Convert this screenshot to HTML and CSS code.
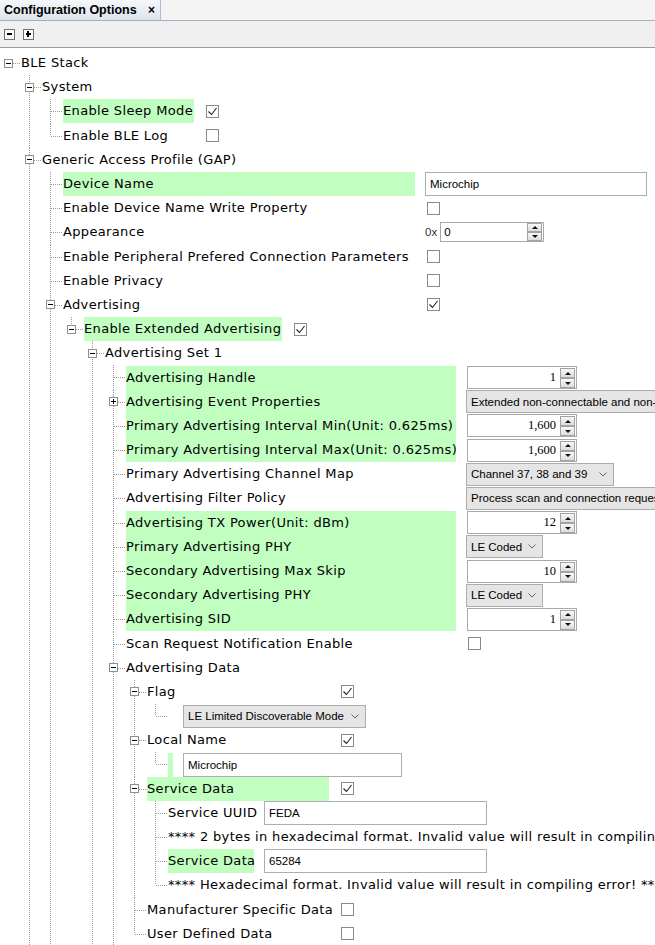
FILE: index.html
```html
<!DOCTYPE html>
<html>
<head>
<meta charset="utf-8">
<link rel="stylesheet" href="styles.css">
</head>
<body>
<div class="tabbar">
  <div class="tab"><span class="tab-title">Configuration Options</span><span class="tab-close">×</span></div>
</div>
<div class="toolbar">
  <span class="tbtn"></span><span class="tbtn plus"></span>
</div>
<div class="tree">
<ul>
 <li class="n root">
  <div class="row"><span class="tw"><i class="bx"></i></span><span class="lbl">BLE Stack</span></div>
  <ul>
   <li class="n">
    <div class="row"><span class="tw"><i class="bx"></i></span><span class="lbl">System</span></div>
    <ul class="g-sys">
     <li class="n"><div class="row"><span class="tw"></span><span class="lbl hl">Enable Sleep Mode</span><span class="cb"><svg width="11" height="11" viewBox="0 0 11 11"><path d="M1.5 5.5l3 3 5-6.5" fill="none" stroke="#222" stroke-width="1.1"/></svg></span></div></li>
     <li class="n last"><div class="row"><span class="tw"></span><span class="lbl">Enable BLE Log</span><span class="cb"></span></div></li>
    </ul>
   </li>
   <li class="n">
    <div class="row"><span class="tw"><i class="bx"></i></span><span class="lbl">Generic Access Profile (GAP)</span></div>
    <ul class="g-gap">
     <li class="n"><div class="row"><span class="tw"></span><span class="lbl hl">Device Name</span><span class="tf w-dev">Microchip</span></div></li>
     <li class="n"><div class="row"><span class="tw"></span><span class="lbl">Enable Device Name Write Property</span><span class="cb"></span></div></li>
     <li class="n"><div class="row"><span class="tw"></span><span class="lbl">Appearance</span><span class="hex">0x</span><span class="spin sm"><span class="v">0</span><span class="sbs"><span class="sb"></span><span class="sb dn"></span></span></span></div></li>
     <li class="n"><div class="row"><span class="tw"></span><span class="lbl">Enable Peripheral Prefered Connection Parameters</span><span class="cb"></span></div></li>
     <li class="n"><div class="row"><span class="tw"></span><span class="lbl">Enable Privacy</span><span class="cb"></span></div></li>
     <li class="n">
      <div class="row"><span class="tw"><i class="bx"></i></span><span class="lbl">Advertising</span><span class="cb"><svg width="11" height="11" viewBox="0 0 11 11"><path d="M1.5 5.5l3 3 5-6.5" fill="none" stroke="#222" stroke-width="1.1"/></svg></span></div>
      <ul class="g-ext">
       <li class="n last">
        <div class="row"><span class="tw"><i class="bx"></i></span><span class="lbl hl">Enable Extended Advertising</span><span class="cb"><svg width="11" height="11" viewBox="0 0 11 11"><path d="M1.5 5.5l3 3 5-6.5" fill="none" stroke="#222" stroke-width="1.1"/></svg></span></div>
        <ul class="g-set">
         <li class="n">
          <div class="row"><span class="tw"><i class="bx"></i></span><span class="lbl">Advertising Set 1</span></div>
          <ul class="g-set1">
           <li class="n"><div class="row"><span class="tw"></span><span class="lbl hl">Advertising Handle</span><span class="spin"><span class="v">1</span><span class="sbs"><span class="sb"></span><span class="sb dn"></span></span></span></div></li>
           <li class="n"><div class="row"><span class="tw"><i class="bx plus"></i></span><span class="lbl hl">Advertising Event Properties</span><span class="combo w-wide"><span>Extended non-connectable and non-scannable undirected</span></span></div></li>
           <li class="n"><div class="row"><span class="tw"></span><span class="lbl hl">Primary Advertising Interval Min(Unit: 0.625ms)</span><span class="spin"><span class="v">1,600</span><span class="sbs"><span class="sb"></span><span class="sb dn"></span></span></span></div></li>
           <li class="n"><div class="row"><span class="tw"></span><span class="lbl hl">Primary Advertising Interval Max(Unit: 0.625ms)</span><span class="spin"><span class="v">1,600</span><span class="sbs"><span class="sb"></span><span class="sb dn"></span></span></span></div></li>
           <li class="n"><div class="row"><span class="tw"></span><span class="lbl">Primary Advertising Channel Map</span><span class="combo w-ch"><span>Channel 37, 38 and 39</span><svg class="chev" width="8" height="5" viewBox="0 0 8 5"><path d="M0.5 0.5l3.5 3.5 3.5-3.5" fill="none" stroke="#666" stroke-width="1"/></svg></span></div></li>
           <li class="n"><div class="row"><span class="tw"></span><span class="lbl">Advertising Filter Policy</span><span class="combo w-wide"><span>Process scan and connection requests from all devices</span></span></div></li>
           <li class="n"><div class="row"><span class="tw"></span><span class="lbl hl">Advertising TX Power(Unit: dBm)</span><span class="spin"><span class="v">12</span><span class="sbs"><span class="sb"></span><span class="sb dn"></span></span></span></div></li>
           <li class="n"><div class="row"><span class="tw"></span><span class="lbl hl">Primary Advertising PHY</span><span class="combo w-le"><span>LE Coded</span><svg class="chev" width="8" height="5" viewBox="0 0 8 5"><path d="M0.5 0.5l3.5 3.5 3.5-3.5" fill="none" stroke="#666" stroke-width="1"/></svg></span></div></li>
           <li class="n"><div class="row"><span class="tw"></span><span class="lbl hl">Secondary Advertising Max Skip</span><span class="spin"><span class="v">10</span><span class="sbs"><span class="sb"></span><span class="sb dn"></span></span></span></div></li>
           <li class="n"><div class="row"><span class="tw"></span><span class="lbl hl">Secondary Advertising PHY</span><span class="combo w-le"><span>LE Coded</span><svg class="chev" width="8" height="5" viewBox="0 0 8 5"><path d="M0.5 0.5l3.5 3.5 3.5-3.5" fill="none" stroke="#666" stroke-width="1"/></svg></span></div></li>
           <li class="n"><div class="row"><span class="tw"></span><span class="lbl hl">Advertising SID</span><span class="spin"><span class="v">1</span><span class="sbs"><span class="sb"></span><span class="sb dn"></span></span></span></div></li>
           <li class="n"><div class="row"><span class="tw"></span><span class="lbl">Scan Request Notification Enable</span><span class="cb"></span></div></li>
           <li class="n">
            <div class="row"><span class="tw"><i class="bx"></i></span><span class="lbl">Advertising Data</span></div>
            <ul class="g-data">
             <li class="n">
              <div class="row"><span class="tw"><i class="bx"></i></span><span class="lbl">Flag</span><span class="cb"><svg width="11" height="11" viewBox="0 0 11 11"><path d="M1.5 5.5l3 3 5-6.5" fill="none" stroke="#222" stroke-width="1.1"/></svg></span></div>
              <ul class="g-sub">
               <li class="n last"><div class="row"><span class="tw"></span><span class="lbl"></span><span class="combo w-flag"><span>LE Limited Discoverable Mode</span><svg class="chev" width="8" height="5" viewBox="0 0 8 5"><path d="M0.5 0.5l3.5 3.5 3.5-3.5" fill="none" stroke="#666" stroke-width="1"/></svg></span></div></li>
              </ul>
             </li>
             <li class="n">
              <div class="row"><span class="tw"><i class="bx"></i></span><span class="lbl">Local Name</span><span class="cb"><svg width="11" height="11" viewBox="0 0 11 11"><path d="M1.5 5.5l3 3 5-6.5" fill="none" stroke="#222" stroke-width="1.1"/></svg></span></div>
              <ul class="g-sub">
               <li class="n last"><div class="row"><span class="tw"></span><span class="lbl hl"></span><span class="tf w-ln">Microchip</span></div></li>
              </ul>
             </li>
             <li class="n">
              <div class="row"><span class="tw"><i class="bx"></i></span><span class="lbl hl">Service Data</span><span class="cb"><svg width="11" height="11" viewBox="0 0 11 11"><path d="M1.5 5.5l3 3 5-6.5" fill="none" stroke="#222" stroke-width="1.1"/></svg></span></div>
              <ul class="g-svc">
               <li class="n"><div class="row"><span class="tw"></span><span class="lbl">Service UUID</span><span class="tf w-svc">FEDA</span></div></li>
               <li class="n"><div class="row"><span class="tw"></span><span class="lbl note">**** 2 bytes in hexadecimal format. Invalid value will result in compiling error! ****</span></div></li>
               <li class="n"><div class="row"><span class="tw"></span><span class="lbl hl">Service Data</span><span class="tf w-svc">65284</span></div></li>
               <li class="n last"><div class="row"><span class="tw"></span><span class="lbl note">**** Hexadecimal format. Invalid value will result in compiling error! ****</span></div></li>
              </ul>
             </li>
             <li class="n"><div class="row"><span class="tw"></span><span class="lbl">Manufacturer Specific Data</span><span class="cb"></span></div></li>
             <li class="n last"><div class="row"><span class="tw"></span><span class="lbl">User Defined Data</span><span class="cb"></span></div></li>
            </ul>
           </li>
          </ul>
         </li>
        </ul>
       </li>
      </ul>
     </li>
    </ul>
   </li>
  </ul>
 </li>
</ul>
</div>
</body>
</html>
```

FILE: styles.css
```css
html, body {
  margin: 0;
  padding: 0;
  overflow: hidden;
  background: #fff;
}
body {
  width: 655px;
  height: 945px;
  font-family: "DejaVu Sans", sans-serif;
  color: #000;
}

/* header */
.tabbar {
  height: 20px;
  border-bottom: 1px solid #9fb1c6;
  background: #f4f4f4;
  display: flex;
}
.tab {
  width: 156px;
  padding-left: 4px;
  display: flex;
  align-items: center;
  background: linear-gradient(#f5f8fb, #dce4ee);
  border-right: 1px solid #aebdcf;
  font: bold 12.5px "Liberation Sans", sans-serif;
  color: #000;
}
.tab-close {
  margin-left: auto;
  margin-right: 5px;
  font-size: 12px;
}
.toolbar {
  height: 26px;
  border-bottom: 1px solid #9d9d9d;
  background: #f0f0f0;
  display: flex;
  align-items: center;
  gap: 8px;
  padding-left: 4px;
}
.tbtn {
  width: 11px;
  height: 11px;
  box-sizing: border-box;
  border: 1px solid #707070;
  background: linear-gradient(#000, #000) 2px 3px / 5px 2px no-repeat, #fafafa;
}
.tbtn.plus {
  background: linear-gradient(#000, #000) 2px 3px / 5px 2px no-repeat,
              linear-gradient(#000, #000) 3px 1px / 2px 6px no-repeat, #fafafa;
}

/* tree */
.tree {
  padding-top: 3px;
  white-space: nowrap;
}
.tree ul {
  list-style: none;
  margin: 0;
  padding: 0;
}
.tree ul ul {
  padding-left: 21px;
}
.n {
  background: repeating-linear-gradient(to bottom, #999 0 1px, transparent 1px 2px) 8px 0 / 1px 100% no-repeat;
}
.n.last {
  background-size: 1px 12px;
}
.n.root {
  background: none;
}
.row {
  display: flex;
  align-items: center;
  height: 24.2px;
  background: repeating-linear-gradient(to right, #999 0 1px, transparent 1px 2px) 9px 12px / 12px 1px no-repeat;
}
.tw {
  flex: none;
  width: 21px;
  display: flex;
  align-items: center;
}
.bx {
  display: block;
  width: 9px;
  height: 9px;
  box-sizing: border-box;
  margin-left: 4px;
  border: 1px solid #8e8e8e;
  background: linear-gradient(#000, #000) 1px 3px / 5px 1px no-repeat, #fff;
}
.bx.plus {
  background: linear-gradient(#000, #000) 1px 3px / 5px 1px no-repeat,
              linear-gradient(#000, #000) 3px 1px / 1px 5px no-repeat, #fff;
}
.lbl {
  display: block;
  flex: none;
  height: 24px;
  line-height: 24px;
  font-size: 13px;
  letter-spacing: 0.35px;
}
.hl {
  background: #c0ffc0;
}

/* label column widths per sibling group */
.g-sys > li > .row > .lbl { width: 131px; }
.g-gap > li > .row > .lbl { width: 352px; }
.g-ext > li > .row > .lbl { width: 198px; }
.g-set1 > li > .row > .lbl { width: 330px; }
.g-data > li > .row > .lbl { width: 182px; }
.g-sub > li > .row > .lbl { width: 5px; }
.g-svc > li > .row > .lbl { width: 86px; }
.g-svc > li > .row > .lbl.note { width: auto; }

/* controls */
.cb {
  flex: none;
  display: flex;
  width: 13px;
  height: 13px;
  box-sizing: border-box;
  border: 1px solid #8a8a8a;
  background: #fff;
  margin-left: 12px;
}
.tf {
  flex: none;
  display: block;
  box-sizing: border-box;
  height: 24px;
  border: 1px solid #abadb3;
  background: #fff;
  margin-left: 10px;
  padding-left: 4px;
  font: 11.5px "Liberation Sans", sans-serif;
  line-height: 22px;
  color: #000;
}
.w-dev { width: 222px; }
.w-ln { width: 219px; }
.w-svc { width: 223px; }

.hex {
  margin-left: 10px;
  font: 11.5px "Liberation Sans", sans-serif;
  color: #333;
}
.spin {
  flex: none;
  display: flex;
  box-sizing: border-box;
  width: 110px;
  height: 23px;
  border: 1px solid #a9a9a9;
  background: #fff;
  margin-left: 11px;
}
.spin .v {
  flex: 1;
  text-align: right;
  padding-right: 4px;
  font: 12.5px "Liberation Serif", serif;
  line-height: 21px;
  color: #000;
}
.spin.sm {
  width: 104px;
  height: 20px;
  margin-left: 3px;
}
.spin.sm .v {
  text-align: left;
  padding-left: 3px;
  font: 11.5px "Liberation Sans", sans-serif;
  line-height: 18px;
}
.sbs {
  display: flex;
  flex-direction: column;
  padding: 1px 1px 0 0;
}
.sb {
  display: flex;
  align-items: center;
  justify-content: center;
  width: 15px;
  height: 10px;
  box-sizing: border-box;
  border: 1px solid #a3a3a3;
  background: linear-gradient(#f8f8f8, #dddddd);
}
.spin.sm .sb {
  height: 9px;
}
.spin.sm .sbs {
  padding-top: 0;
}
.sb::before {
  content: "";
  border-left: 3px solid transparent;
  border-right: 3px solid transparent;
  border-bottom: 3px solid #111;
}
.sb.dn::before {
  border-bottom: 0;
  border-top: 3px solid #111;
}
.combo {
  flex: none;
  display: flex;
  align-items: center;
  justify-content: space-between;
  box-sizing: border-box;
  height: 23px;
  border: 1px solid #acacac;
  background: #e5e5e5;
  margin-left: 10px;
  padding: 0 6px 0 4px;
  font: 11.5px "Liberation Sans", sans-serif;
  color: #000;
}
.w-wide { width: 290px; }
.w-ch { width: 148px; }
.w-le { width: 77px; }
.w-flag { width: 183px; }
```
